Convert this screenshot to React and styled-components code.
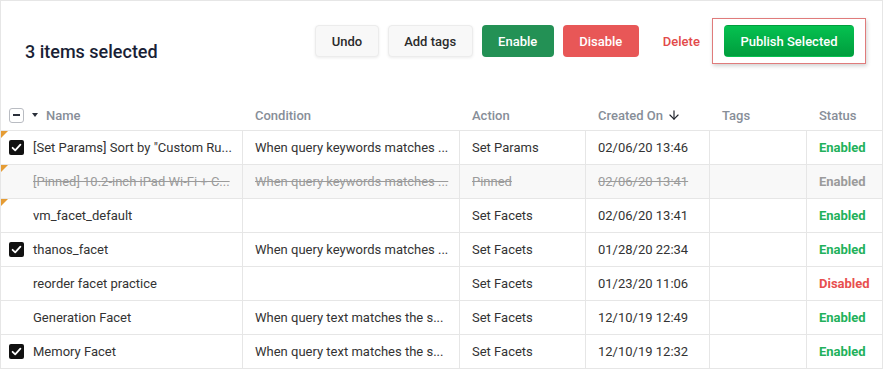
import styled, { createGlobalStyle } from "styled-components";
import { ArrowDown } from "lucide-react";

const GlobalStyle = createGlobalStyle`
  html, body {
    margin: 0;
    padding: 0;
    background: #fff;
  }
  body {
    font-family: Roboto, "Liberation Sans", Arial, sans-serif;
    -webkit-font-smoothing: antialiased;
  }
`;

const rows = [
  {
    name: '[Set Params] Sort by "Custom Ru...',
    condition: "When query keywords matches ...",
    action: "Set Params",
    created: "02/06/20 13:46",
    status: "Enabled",
    checked: true,
    flagged: true,
  },
  {
    name: "[Pinned] 10.2-inch iPad Wi-Fi + C...",
    condition: "When query keywords matches ...",
    action: "Pinned",
    created: "02/06/20 13:41",
    status: "Enabled",
    flagged: true,
    removed: true,
  },
  {
    name: "vm_facet_default",
    condition: "",
    action: "Set Facets",
    created: "02/06/20 13:41",
    status: "Enabled",
    flagged: true,
  },
  {
    name: "thanos_facet",
    condition: "When query keywords matches ...",
    action: "Set Facets",
    created: "01/28/20 22:34",
    status: "Enabled",
    checked: true,
  },
  {
    name: "reorder facet practice",
    condition: "",
    action: "Set Facets",
    created: "01/23/20 11:06",
    status: "Disabled",
  },
  {
    name: "Generation Facet",
    condition: "When query text matches the s...",
    action: "Set Facets",
    created: "12/10/19 12:49",
    status: "Enabled",
  },
  {
    name: "Memory Facet",
    condition: "When query text matches the s...",
    action: "Set Facets",
    created: "12/10/19 12:32",
    status: "Enabled",
    checked: true,
  },
];

const Page = styled.div`
  width: 883px;
  height: 369px;
  box-sizing: border-box;
  border: 1px solid #e6e6e6;
  border-bottom: none;
  overflow: hidden;
`;

const Toolbar = styled.div`
  height: 99px;
  box-sizing: border-box;
  display: flex;
  justify-content: space-between;
  align-items: flex-start;
  padding: 17px 16px 0 24px;
`;

const Title = styled.h1`
  margin: 23px 0 0;
  font-size: 18px;
  line-height: 22px;
  font-weight: 500;
  color: #1a1f36;
`;

const Actions = styled.div`
  display: flex;
  align-items: center;
  gap: 9px;
`;

const Button = styled.button`
  height: 32px;
  padding: 0 15.5px;
  border-radius: 4px;
  font-family: inherit;
  font-size: 13px;
  font-weight: 500;
  cursor: pointer;
  border: 1px solid transparent;
  ${({ $variant }) => {
    switch ($variant) {
      case "enable":
        return "background: #239155; color: #fff;";
      case "disable":
        return "background: #e85757; color: #fff;";
      case "publish":
        return "background: linear-gradient(#05c150, #009d3d); color: #fff;";
      case "text":
        return "background: none; color: #e24a4a; padding: 0 2px 0 14px;";
      default:
        return `
          background: #f8f8f8;
          color: #2b2b2b;
          border-color: #ececec;
          box-shadow: 0 1px 3px rgba(0, 0, 0, 0.08);
        `;
    }
  }}
`;

const Highlight = styled.div`
  padding: 6px 11px;
  border: 1.5px solid #e07b7b;
  box-shadow: 1px 2px 4px rgba(0, 0, 0, 0.18);
  display: flex;
`;

const cols = "241px 217px 126px 124px 97px 1fr";

const HeadRow = styled.div`
  display: grid;
  grid-template-columns: ${cols};
  height: 31px;
  box-sizing: border-box;
  border-bottom: 1px solid #e6e6e6;
`;

const HeadCell = styled.div`
  display: flex;
  align-items: center;
  padding-left: ${({ $first }) => ($first ? "8px" : "13px")};
  font-size: 13px;
  font-weight: 500;
  color: #878e98;

  svg {
    margin-left: 4px;
  }
`;

const Row = styled.div`
  position: relative;
  display: grid;
  grid-template-columns: ${cols};
  height: 34px;
  box-sizing: border-box;
  border-bottom: 1px solid #e6e6e6;
  background: ${({ $removed }) => ($removed ? "#f8f8f8" : "#fff")};
  color: ${({ $removed }) => ($removed ? "#9b9b9b" : "#333")};
`;

const Flag = styled.span`
  position: absolute;
  left: 0;
  top: 0;
  width: 0;
  height: 0;
  border-top: 7px solid #e59c34;
  border-right: 7px solid transparent;
`;

const Cell = styled.div`
  display: flex;
  align-items: center;
  padding-left: ${({ $first }) => ($first ? "8px" : "12px")};
  border-left: ${({ $first }) => ($first ? "none" : "1px solid #e6e6e6")};
  font-size: 13px;
  white-space: nowrap;
  overflow: hidden;
  min-width: 0;
  text-decoration: ${({ $struck }) => ($struck ? "line-through" : "none")};
`;

const Status = styled(Cell)`
  font-weight: 700;
  color: ${({ $status, $removed }) =>
    $removed ? "#9b9b9b" : $status === "Disabled" ? "#e84f4f" : "#22b15b"};
`;

const CheckSlot = styled.span`
  width: 15px;
  height: 15px;
  flex: none;
  margin-right: 9px;
  display: flex;
`;

const HeadBox = styled.span`
  width: 15px;
  height: 15px;
  box-sizing: border-box;
  border: 1px solid #b9bcc2;
  border-radius: 3px;
  background: #fff;
  display: flex;
  align-items: center;
  justify-content: center;
  flex: none;
  margin-right: 8px;

  &::after {
    content: "";
    width: 7px;
    height: 2px;
    background: #2a2f3a;
  }
`;

const Caret = styled.span`
  width: 0;
  height: 0;
  border-left: 3.5px solid transparent;
  border-right: 3.5px solid transparent;
  border-top: 4px solid #2a2f3a;
  margin-right: 8px;
`;

const Checked = () => (
  <svg width="15" height="15" viewBox="0 0 15 15">
    <rect width="15" height="15" rx="2" fill="#111" />
    <path
      d="M3.6 7.8 L6.2 10.3 L11.4 4.6"
      fill="none"
      stroke="#fff"
      strokeWidth="1.8"
      strokeLinecap="round"
      strokeLinejoin="round"
    />
  </svg>
);

export default function App() {
  return (
    <>
      <GlobalStyle />
      <Page>
        <Toolbar>
          <Title>3 items selected</Title>
          <Actions>
            <Button>Undo</Button>
            <Button>Add tags</Button>
            <Button $variant="enable">Enable</Button>
            <Button $variant="disable">Disable</Button>
            <Button $variant="text">Delete</Button>
            <Highlight>
              <Button $variant="publish">Publish Selected</Button>
            </Highlight>
          </Actions>
        </Toolbar>
        <HeadRow>
          <HeadCell $first>
            <HeadBox />
            <Caret />
            Name
          </HeadCell>
          <HeadCell>Condition</HeadCell>
          <HeadCell>Action</HeadCell>
          <HeadCell>
            Created On
            <ArrowDown size={14} color="#1f232b" strokeWidth={2} />
          </HeadCell>
          <HeadCell>Tags</HeadCell>
          <HeadCell>Status</HeadCell>
        </HeadRow>
        {rows.map((r) => (
          <Row key={r.name} $removed={r.removed}>
            {r.flagged && <Flag />}
            <Cell $first $struck={r.removed}>
              <CheckSlot>{r.checked && <Checked />}</CheckSlot>
              <span>{r.name}</span>
            </Cell>
            <Cell $struck={r.removed}>{r.condition}</Cell>
            <Cell $struck={r.removed}>{r.action}</Cell>
            <Cell $struck={r.removed}>{r.created}</Cell>
            <Cell />
            <Status $status={r.status} $removed={r.removed}>
              {r.status}
            </Status>
          </Row>
        ))}
      </Page>
    </>
  );
}
